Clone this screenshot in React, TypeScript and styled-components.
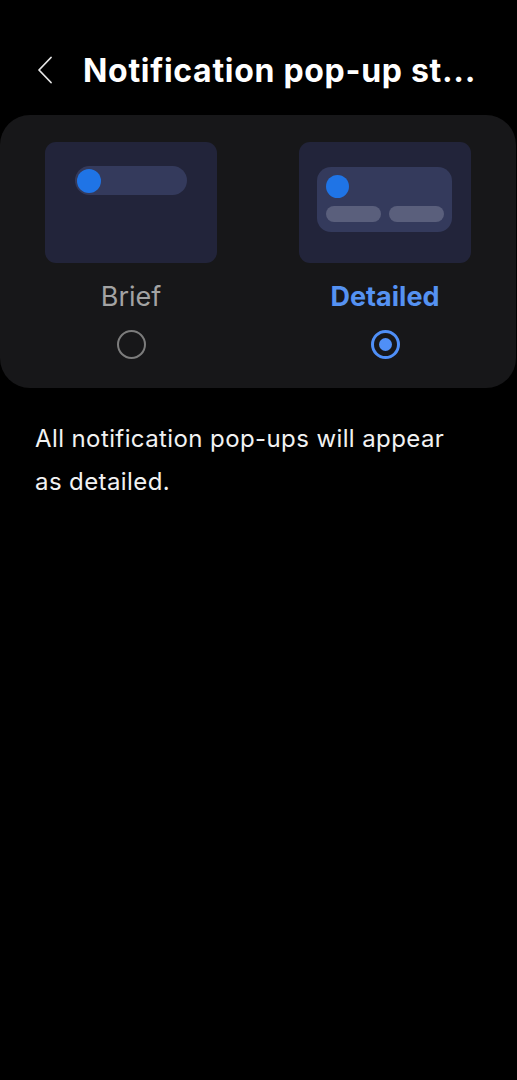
import React from "react";
import styled, { createGlobalStyle } from "styled-components";

const Global = createGlobalStyle`
  html, body { margin: 0; padding: 0; background: #000; }
  body { font-family: Inter, "Noto Sans", Roboto, sans-serif; -webkit-font-smoothing: antialiased; }
`;

const Screen = styled.div`
  width: 517px;
  min-height: 1080px;
  background: #000;
  display: flex;
  flex-direction: column;
`;

const Header = styled.header`
  display: flex;
  align-items: center;
  height: 60px;
  padding: 40px 0 0 37px;
  gap: 30px;
`;

const BackButton = styled.button`
  display: flex;
  align-items: center;
  justify-content: center;
  width: 16px;
  height: 28px;
  padding: 0;
  border: 0;
  background: transparent;
  color: #e6e6e6;
`;

const Title = styled.h1`
  margin: 0;
  font-size: 32px;
  font-weight: 700;
  color: #fff;
  letter-spacing: 0.7px;
  white-space: nowrap;
`;

const Card = styled.div`
  margin: 15px 1px 0 0;
  background: #171719;
  border-radius: 30px;
  padding: 27px 45px 29px 45px;
  display: grid;
  grid-template-columns: 172px 172px;
  justify-content: space-between;
`;

const Option = styled.div`
  display: flex;
  flex-direction: column;
  align-items: center;
`;

const Preview = styled.div`
  width: 172px;
  height: 121px;
  border-radius: 11px;
  background: #22243a;
  box-sizing: border-box;
  display: flex;
  flex-direction: column;
`;

const BriefPill = styled.div`
  margin: 24px 0 0 30px;
  width: 112px;
  height: 29px;
  border-radius: 15px;
  background: #343a5c;
  display: flex;
  align-items: center;
  padding-left: 2px;
  box-sizing: border-box;
`;

const Dot = styled.div<{ $size: number }>`
  width: ${(p) => p.$size}px;
  height: ${(p) => p.$size}px;
  border-radius: 50%;
  background: #1f74e6;
`;

const DetailCard = styled.div`
  margin: 25px 0 0 18px;
  width: 135px;
  height: 65px;
  border-radius: 14px;
  background: #343a5c;
  box-sizing: border-box;
  padding: 8px 8px 0 9px;
  display: flex;
  flex-direction: column;
  gap: 8px;
`;

const SubRow = styled.div`
  display: flex;
  gap: 8px;
`;

const SubPill = styled.div`
  width: 55px;
  height: 16px;
  border-radius: 8px;
  background: #5a5f7c;
`;

const Label = styled.div<{ $active: boolean }>`
  margin-top: 16px;
  height: 36px;
  line-height: 36px;
  font-size: 27px;
  font-weight: ${(p) => (p.$active ? 700 : 400)};
  color: ${(p) => (p.$active ? "#5592f2" : "#a3a3a3")};
`;

const Radio = styled.div<{ $checked: boolean }>`
  margin-top: 15px;
  width: 29px;
  height: 29px;
  border-radius: 50%;
  box-sizing: border-box;
  border: ${(p) => (p.$checked ? "3px solid #4f8ff7" : "2px solid #7c7c7c")};
  display: flex;
  align-items: center;
  justify-content: center;
`;

const RadioDot = styled.div`
  width: 13px;
  height: 13px;
  border-radius: 50%;
  background: #4f8ff7;
`;

const Description = styled.p`
  margin: 29px 55px 0 35px;
  font-size: 24px;
  line-height: 43px;
  letter-spacing: 0.4px;
  color: #f2f2f2;
`;

export default function App() {
  return (
    <Screen>
      <Global />
      <Header>
        <BackButton aria-label="Back">
          <svg width="16" height="28" viewBox="0 0 16 28" fill="none">
            <polyline points="14,1.5 2,14 14,26.5" stroke="currentColor" strokeWidth="1.8" strokeLinecap="round" strokeLinejoin="round" />
          </svg>
        </BackButton>
        <Title>Notification pop-up st...</Title>
      </Header>
      <Card>
        <Option>
          <Preview>
            <BriefPill>
              <Dot $size={24} />
            </BriefPill>
          </Preview>
          <Label $active={false}>Brief</Label>
          <Radio $checked={false} />
        </Option>
        <Option>
          <Preview>
            <DetailCard>
              <Dot $size={23} />
              <SubRow>
                <SubPill />
                <SubPill />
              </SubRow>
            </DetailCard>
          </Preview>
          <Label $active={true}>Detailed</Label>
          <Radio $checked={true}>
            <RadioDot />
          </Radio>
        </Option>
      </Card>
      <Description>All notification pop-ups will appear as detailed.</Description>
    </Screen>
  );
}
